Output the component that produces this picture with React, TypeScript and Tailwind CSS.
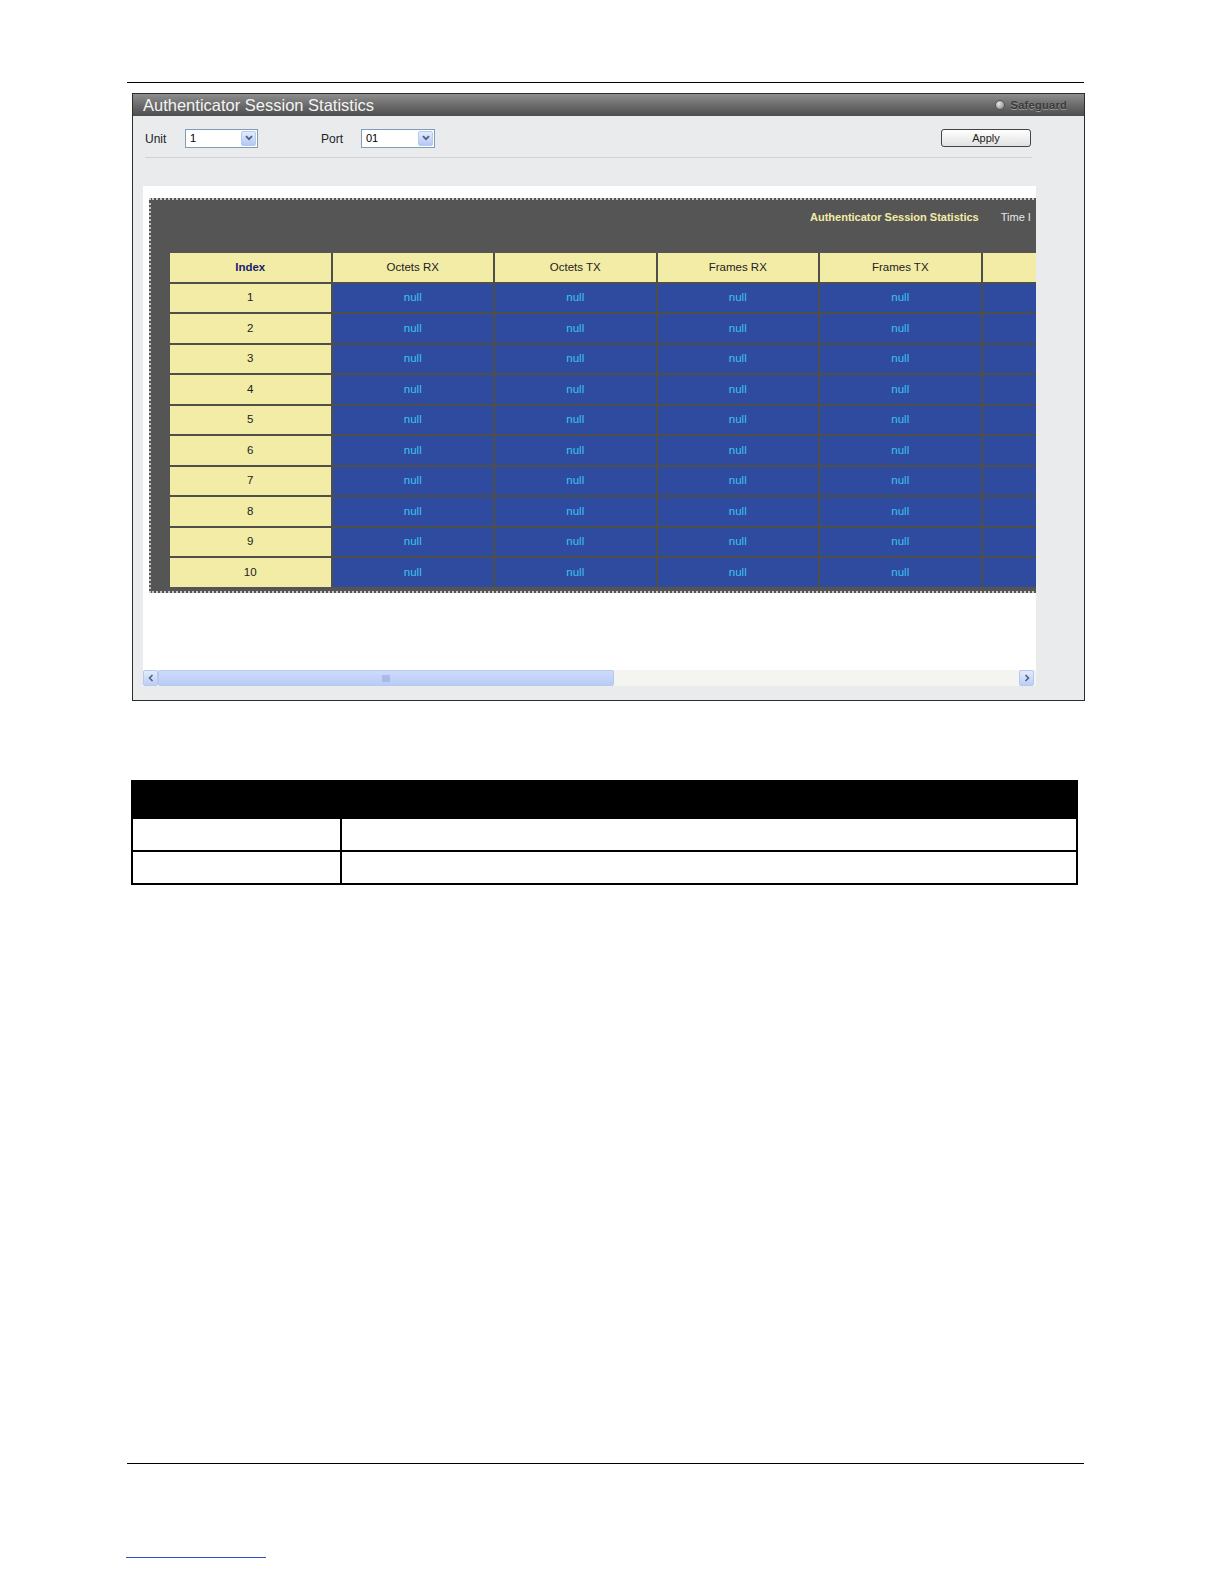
const columns = ['Index', 'Octets RX', 'Octets TX', 'Frames RX', 'Frames TX', '']

const rows = Array.from({ length: 10 }, (_, i) => i + 1)

function SelectBox({ value, className = '' }: { value: string; className?: string }) {
  return (
    <div className={`flex h-[19px] items-stretch border border-[#7f9db9] bg-white ${className}`}>
      <span className="flex-1 pl-[4px] text-[11px] leading-[17px] text-black">{value}</span>
      <span className="m-[1px] flex w-[15px] items-center justify-center rounded-[2px] border border-[#b8c9ef] bg-gradient-to-b from-[#e3ecfd] to-[#b5c8f4]">
        <svg width="8" height="6" viewBox="0 0 8 6">
          <path d="M1 1.2 L4 4.2 L7 1.2" fill="none" stroke="#4d6185" strokeWidth="1.8" />
        </svg>
      </span>
    </div>
  )
}

function SessionTable() {
  return (
    <div className="flex flex-col gap-[2px] bg-[#4f4f4a]">
      <div className="flex gap-[2px]">
        {columns.map((c, i) => (
          <div
            key={i}
            className={`flex h-[28.5px] w-[160.5px] shrink-0 items-center justify-center bg-[#f2eca6] text-[11.5px] ${
              i === 0 ? 'font-bold text-[#1b1b6e]' : 'text-[#222]'
            }`}
          >
            {c}
          </div>
        ))}
      </div>
      {rows.map((r) => (
        <div key={r} className="flex gap-[2px]">
          <div className="flex h-[28.5px] w-[160.5px] shrink-0 items-center justify-center bg-[#f2eca6] text-[11.5px] text-[#222]">
            {r}
          </div>
          {columns.slice(1).map((c, i) => (
            <div
              key={i}
              className="flex h-[28.5px] w-[160.5px] shrink-0 items-center justify-center bg-[#2f4b9f] text-[11.5px] text-[#3cc2f5]"
            >
              {c ? 'null' : ''}
            </div>
          ))}
        </div>
      ))}
    </div>
  )
}

export default function App() {
  return (
    <div className="relative flex h-[1584px] w-[1224px] flex-col bg-white font-['Liberation_Sans',Arial,sans-serif]">
      <div className="ml-[127px] mt-[82px] h-px w-[957px] bg-black" />

      {/* panel */}
      <div className="ml-[132px] mt-[10px] flex h-[608px] w-[953px] flex-col border border-[#2d2d2d] bg-[#e9ebed]">
        <div className="flex h-[22px] items-center justify-between bg-gradient-to-b from-[#8e8e8e] via-[#6c6c6c] to-[#4e4e4e] pl-[10px] pr-[17px]">
          <span className="text-[16.5px] leading-none text-[#f4f4f4]">Authenticator Session Statistics</span>
          <div className="flex items-center gap-[6px]">
            <span className="h-[10px] w-[10px] rounded-full border border-[#555] bg-[radial-gradient(circle_at_35%_35%,#e8e8e8,#7a7a7a)]" />
            <span className="text-[11px] font-bold tracking-[0.3px] text-[#3a3a3a] [text-shadow:0_1px_0_#9a9a9a]">
              Safeguard
            </span>
          </div>
        </div>

        <div className="flex flex-col pl-[12px]">
          <div className="mt-[12px] flex h-[20px] items-center">
            <span className="w-[40px] pt-[2px] text-[12px] text-[#222]">Unit</span>
            <SelectBox value="1" className="w-[73px]" />
            <span className="ml-[63px] w-[40px] pt-[2px] text-[12px] text-[#222]">Port</span>
            <SelectBox value="01" className="w-[74px]" />
            <button
              type="button"
              className="ml-[506px] h-[18px] w-[90px] rounded-[3px] border border-[#444] bg-gradient-to-b from-white to-[#e2e2e2] text-[11px] leading-none text-[#222]"
            >
              Apply
            </button>
          </div>
          <div className="mt-[9px] h-px w-[887px] bg-[#cfd2d5]" />
        </div>

        {/* frame */}
        <div className="ml-[10px] mt-[28px] flex h-[500px] w-[893px] flex-col bg-white">
          <div className="flex-1 overflow-hidden pl-[6px] pt-[12px]">
            <div className="w-[1000px] border-2 border-dotted border-[#c8c8c8] bg-[#555555] pb-[4px] pl-[19px]">
              <div className="flex h-[53px] items-start pl-[640px] pt-[9px] text-[11px]">
                <span className="font-bold text-[#f2eca6]">Authenticator Session Statistics</span>
                <span className="ml-[22px] text-[#e8e8e8]">Time I</span>
              </div>
              <SessionTable />
            </div>
          </div>

          {/* scrollbar */}
          <div className="flex h-[16px] items-stretch bg-[#f4f4f0]">
            <div className="flex w-[15px] items-center justify-center rounded-[2px] border border-[#b8c9ef] bg-gradient-to-b from-[#e3ecfd] to-[#bccdf5]">
              <svg width="6" height="8" viewBox="0 0 6 8">
                <path d="M4.5 1 L1.5 4 L4.5 7" fill="none" stroke="#4d6185" strokeWidth="1.6" />
              </svg>
            </div>
            <div className="flex w-[456px] items-center justify-center rounded-[2px] border border-[#b8c9ef] bg-gradient-to-b from-[#cddafb] to-[#b9cbf7]">
              <svg width="8" height="7" viewBox="0 0 8 7">
                <path d="M1 0V7M3 0V7M5 0V7M7 0V7" stroke="#8ea4d8" strokeWidth="1" />
              </svg>
            </div>
            <div className="flex-1" />
            <div className="mr-[2px] flex w-[15px] items-center justify-center rounded-[2px] border border-[#b8c9ef] bg-gradient-to-b from-[#e3ecfd] to-[#bccdf5]">
              <svg width="6" height="8" viewBox="0 0 6 8">
                <path d="M1.5 1 L4.5 4 L1.5 7" fill="none" stroke="#4d6185" strokeWidth="1.6" />
              </svg>
            </div>
          </div>
        </div>
      </div>

      {/* description table */}
      <div className="ml-[131px] mt-[79px] w-[947px] border-2 border-black">
        <div className="h-[37px] bg-black" />
        <div className="flex h-[33px] border-b-2 border-black">
          <div className="w-[209px] border-r-2 border-black" />
          <div className="flex-1" />
        </div>
        <div className="flex h-[31px]">
          <div className="w-[209px] border-r-2 border-black" />
          <div className="flex-1" />
        </div>
      </div>

      <div className="ml-[127px] mt-[578px] h-px w-[957px] bg-black" />
      <div className="ml-[126px] mt-[93px] h-px w-[140px] bg-[#3050c0]" />
    </div>
  )
}
